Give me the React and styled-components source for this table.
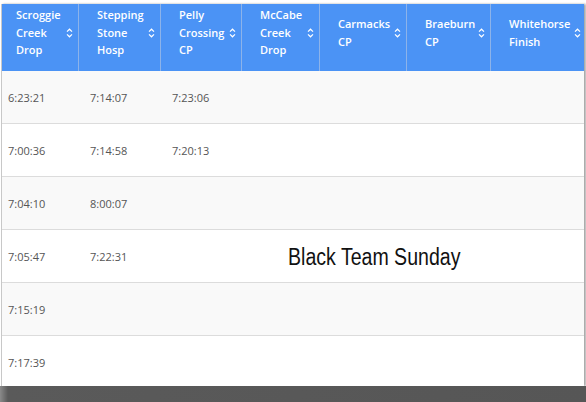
import React from "react";
import styled, { createGlobalStyle } from "styled-components";

const columns = [
  ["Scroggie", "Creek", "Drop"],
  ["Stepping", "Stone", "Hosp"],
  ["Pelly", "Crossing", "CP"],
  ["McCabe", "Creek", "Drop"],
  ["Carmacks", "CP"],
  ["Braeburn", "CP"],
  ["Whitehorse", "Finish"],
];

const rows = [
  ["6:23:21", "7:14:07", "7:23:06"],
  ["7:00:36", "7:14:58", "7:20:13"],
  ["7:04:10", "8:00:07"],
  ["7:05:47", "7:22:31"],
  ["7:15:19"],
  ["7:17:39"],
];

const GRID = "76px 82px 81px 78px 87px 84px 93px";

const GlobalStyle = createGlobalStyle`
  html, body {
    margin: 0;
    padding: 0;
    background: #fff;
  }
`;

const Shot = styled.div`
  position: relative;
  width: 586px;
  height: 402px;
  overflow: hidden;
  background: #fff;
`;

const Frame = styled.div`
  margin: 4px 0 0 1px;
  width: 582px;
  height: 382px;
  overflow: hidden;
  border-left: 1px solid #c8c8c8;
  box-shadow: 2px 0 2px rgba(0, 0, 0, 0.35);
  font-family: "Open Sans", "Noto Sans", sans-serif;
`;

const HeadRow = styled.div`
  display: grid;
  grid-template-columns: ${GRID};
  height: 67px;
  background: #4b93f5;
`;

const HeadCell = styled.div`
  display: flex;
  align-items: center;
  padding: 0 ${(p) => (p.$last ? 2 : 5)}px 10px ${(p) => (p.$first ? 14 : 18)}px;
  border-left: ${(p) => (p.$first ? "none" : "1px solid #8cb3ea")};
  color: #fff;
  font-size: 11px;
  font-weight: 600;
  line-height: 17.5px;
`;

const Label = styled.div`
  flex: 1;
`;

const SortIcon = () => (
  <svg width="7" height="10" viewBox="0 0 7 10" fill="none" stroke="#fff" strokeWidth="1.2">
    <path d="M1 3.6 L3.5 1.2 L6 3.6" />
    <path d="M1 6.4 L3.5 8.8 L6 6.4" />
  </svg>
);

const BodyRow = styled.div`
  display: grid;
  grid-template-columns: ${GRID};
  height: 52px;
  border-bottom: 1px solid #dcdcdc;
  background: ${(p) => (p.$odd ? "#f9f9f9" : "#fff")};
`;

const BodyCell = styled.div`
  display: flex;
  align-items: center;
  padding-left: ${(p) => (p.$first ? 6 : 12)}px;
  color: #555;
  font-size: 11px;
`;

const Note = styled.div`
  position: absolute;
  left: 288px;
  top: 244px;
  font-family: "Liberation Sans", Arial, sans-serif;
  font-size: 23px;
  color: #111;
  transform: scaleX(0.85);
  transform-origin: left center;
  white-space: nowrap;
`;

const Bottom = styled.div`
  height: 16px;
  background: linear-gradient(to right, #8a8a8a 0, #5a5a5a 8px, #565656 100%);
`;

export default function App() {
  return (
    <>
      <GlobalStyle />
      <Shot>
        <Frame>
          <HeadRow>
            {columns.map((lines, i) => (
              <HeadCell key={i} $first={i === 0} $last={i === columns.length - 1}>
                <Label>
                  {lines.map((l) => (
                    <div key={l}>{l}</div>
                  ))}
                </Label>
                <SortIcon />
              </HeadCell>
            ))}
          </HeadRow>
          {rows.map((r, i) => (
            <BodyRow key={i} $odd={i % 2 === 0}>
              {columns.map((_, j) => (
                <BodyCell key={j} $first={j === 0}>
                  {r[j] || ""}
                </BodyCell>
              ))}
            </BodyRow>
          ))}
        </Frame>
        <Bottom />
        <Note>Black Team Sunday</Note>
      </Shot>
    </>
  );
}
